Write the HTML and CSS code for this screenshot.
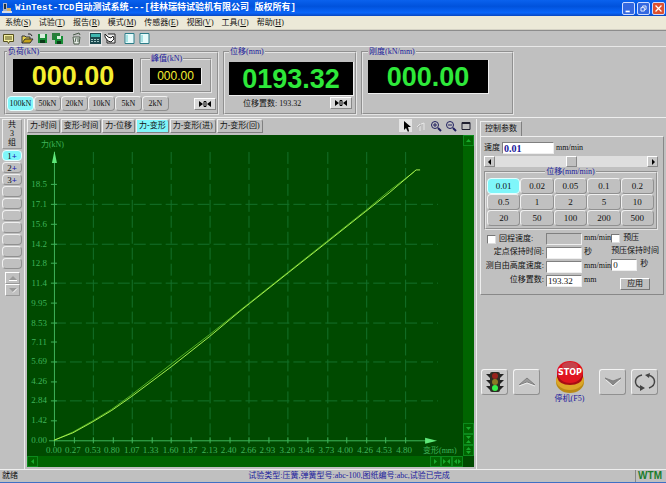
FILE: index.html
```html
<!DOCTYPE html>
<html lang="zh-CN">
<head>
    <meta charset="UTF-8">
    <meta name="viewport" content="width=device-width, initial-scale=1.0">
    <title>WinTest-TCD自动测试系统</title>
    <link rel="stylesheet" href="styles.css">
</head>
<body>

    <header class="title-bar">
        <svg class="app-icon" viewBox="0 0 11 12"><path d="M1 1h4v8H1z" fill="#aab4c8"/><path d="M2 2h2v5H2z" fill="#234"/><path d="M5 6h4v4H5z" fill="#d8b060"/><path d="M0 9h10v2H0z" fill="#d7dce8"/></svg>
        <h1>WinTest-TCD自动测试系统---[桂林瑞特试验机有限公司 版权所有]</h1>
        <div class="window-buttons">
            <button aria-label="最小化"><svg viewBox="0 0 13 13"><path d="M3 9h5v2H3z" fill="#fff"/></svg></button>
            <button aria-label="还原"><svg viewBox="0 0 13 13" fill="none" stroke="#fff"><path d="M5.500 5V3.500h4v4H8M3.500 5.500h4v4h-4z"/></svg></button>
            <button class="close" aria-label="关闭"><svg viewBox="0 0 13 13" stroke="#fff" stroke-width="1.500"><path d="M3 3l7 7M10 3l-7 7"/></svg></button>
        </div>
    </header>

    <nav class="menu">
        <a href="#">系统(<u>S</u>)</a>
        <a href="#">试验(<u>T</u>)</a>
        <a href="#">报告(<u>R</u>)</a>
        <a href="#">模式(<u>M</u>)</a>
        <a href="#">传感器(<u>E</u>)</a>
        <a href="#">视图(<u>V</u>)</a>
        <a href="#">工具(<u>U</u>)</a>
        <a href="#">帮助(<u>H</u>)</a>
    </nav>

    <div class="toolbar">
        <button aria-label="数据"><svg viewBox="0 0 13 13"><path d="M1.500 2.500h10v7h-4l-1 2-1-2h-4z" fill="#f4efa0" stroke="#55501c"/><path d="M3 5h7M3 7h7" stroke="#55501c"/></svg></button>
        <span class="divider"></span>
        <button aria-label="打开"><svg viewBox="0 0 13 13"><path d="M1 11V4h3l1 1h4v2" fill="#e5d04c" stroke="#333"/><path d="M1 11l3-4h8l-3 4z" fill="#c5a41c" stroke="#333"/><path d="M7 2q3-1 4 2" fill="none" stroke="#222"/></svg></button>
        <button aria-label="保存"><svg viewBox="0 0 13 13"><path d="M2 2h9v9H2z" fill="#168c35"/><path d="M4 2h5v4H4z" fill="#d8eedb"/><path d="M4 8h5v3H4z" fill="#0b3a19"/></svg></button>
        <button aria-label="另存"><svg viewBox="0 0 13 13"><path d="M1 1h8v7H1z" fill="#2a7d3b"/><path d="M4 4h8v8H4z" fill="#168c35"/><path d="M6 4h4v3H6z" fill="#d8eedb"/><path d="M6 9h4v3H6z" fill="#0b3a19"/></svg></button>
        <span class="divider"></span>
        <button aria-label="删除"><svg viewBox="0 0 13 13"><path d="M3 5h7l-1 7H4z" fill="#e8efe8" stroke="#4b5b4b"/><path d="M3 3l6-2 1 2M6 6l-1 4M8 6v4" fill="none" stroke="#4b5b4b"/></svg></button>
        <span class="divider"></span>
        <button class="pressed" aria-label="面板"><svg viewBox="0 0 13 13"><path d="M1 1h11v11H1z" fill="#1c4a50"/><path d="M2 2h9v3H2z" fill="#3fb7b0"/><path d="M2 7.500h9M2 9.500h9" stroke="#9fc4c4" stroke-dasharray="2 1"/></svg></button>
        <button aria-label="设置"><svg viewBox="0 0 13 13"><path d="M4 2h7v9H3V6" fill="#eee" stroke="#222"/><path d="M1 2l3 3 3 1 2-2 1 3-3 3-3-1-3-4z" fill="#fff" stroke="#222"/></svg></button>
        <span class="divider"></span>
        <button aria-label="左栏"><svg viewBox="0 0 13 13"><path d="M2 1.500h9v10H2z" fill="#e6fbfb" stroke="#2c7d89"/><path d="M4 3v7" stroke="#6cc" /></svg></button>
        <button aria-label="右栏"><svg viewBox="0 0 13 13"><path d="M2 1.500h9v10H2z" fill="#e6fbfb" stroke="#2c7d89"/><path d="M4 3v7" stroke="#6cc" /></svg></button>
    </div>

    <section class="displays">
        <fieldset class="load">
            <legend>负荷(kN)</legend>
            <div class="load-row">
                <output class="led yellow">000.00</output>
                <fieldset class="peak">
                    <legend>峰值(kN)</legend>
                    <output class="led small yellow">000.00</output>
                </fieldset>
            </div>
            <div class="range-row">
                <button class="key active">100kN</button>
                <button class="key">50kN</button>
                <button class="key">20kN</button>
                <button class="key">10kN</button>
                <button class="key">5kN</button>
                <button class="key">2kN</button>
                <button class="zero" aria-label="负荷清零"><svg viewBox="0 0 14 8"><path d="M1 1l4 3-4 3zM13 1L9 4l4 3z"/><path d="M6 1.500h2v5H6z" fill="none" stroke="#000"/></svg></button>
            </div>
        </fieldset>
        <fieldset class="travel">
            <legend>位移(mm)</legend>
            <output class="led">0193.32</output>
            <div class="preset-row">
                <span>位移置数: 193.32</span>
                <button class="zero" aria-label="位移清零"><svg viewBox="0 0 14 8"><path d="M1 1l4 3-4 3zM13 1L9 4l4 3z"/><path d="M6 1.500h2v5H6z" fill="none" stroke="#000"/></svg></button>
            </div>
        </fieldset>
        <fieldset class="stiffness">
            <legend>刚度(kN/mm)</legend>
            <output class="led">000.00</output>
        </fieldset>
    </section>

    <main>
        <aside class="groups">
            <div class="group-count"><span>共</span><span>3</span><span>组</span></div>
            <button class="key active">1<b>+</b></button>
            <button class="key">2<b>+</b></button>
            <button class="key">3<b>+</b></button>
            <button class="key" aria-label="第4组"></button>
            <button class="key" aria-label="第5组"></button>
            <button class="key" aria-label="第6组"></button>
            <button class="key" aria-label="第7组"></button>
            <button class="key" aria-label="第8组"></button>
            <button class="key" aria-label="第9组"></button>
            <button class="key" aria-label="第10组"></button>
            <div class="page-buttons">
                <button aria-label="上一页"><svg viewBox="0 0 10 8"><path d="M1 6l4-4 4 4z" fill="#999"/><path d="M1 6.500h8" stroke="#fff"/></svg></button>
                <button aria-label="下一页"><svg viewBox="0 0 10 8"><path d="M1 2h8L5 6z" fill="#999"/><path d="M5 6.500l4-4" stroke="#fff"/></svg></button>
            </div>
        </aside>

        <section class="chart">
            <div class="chart-head">
                <button class="tab">力-时间</button>
                <button class="tab">变形-时间</button>
                <button class="tab">力-位移</button>
                <button class="tab active">力-变形</button>
                <button class="tab">力-变形(进)</button>
                <button class="tab">力-变形(回)</button>
                <div class="chart-tools">
                    <button class="pressed" aria-label="选择"><svg viewBox="0 0 12 12"><path d="M4 1v9l2-2 2 4 1-1-1-4h3z"/></svg></button>
                    <button aria-label="移动"><svg viewBox="0 0 12 12" fill="none" stroke="#e6e6e6"><path d="M2 7l3-3v7M6 4l3-1v7"/><path d="M3 7l3-2" stroke="#aaa"/></svg></button>
                    <button aria-label="放大"><svg viewBox="0 0 12 12" fill="none" stroke="#202060"><circle cx="5" cy="5" r="3.500"/><path d="M3 5h4M5 3v4"/><path d="M8 8l3 3" stroke-width="2"/></svg></button>
                    <button aria-label="缩小"><svg viewBox="0 0 12 12" fill="none" stroke="#202060"><circle cx="5" cy="5" r="3.500"/><path d="M3 5h4"/><path d="M8 8l3 3" stroke-width="2"/></svg></button>
                    <button aria-label="全屏"><svg viewBox="0 0 12 12"><path d="M2 2.500h8v7H2z" fill="none" stroke="#202030"/><path d="M2 2h8v2H2z" fill="#202030"/></svg></button>
                </div>
            </div>

            <div class="plot">
                <svg class="curve" viewBox="0 0 437 322">
                    <!-- 网格 -->
                    <path class="grid" d="M66.500 17v289M105.500 17v289M144.500 17v289M183.500 17v289M222.500 17v289M261.500 17v289M301.500 17v289M340.500 17v289M379.500 17v289"/>
                    <path class="grid" d="M27 266.500h385M27 227.500h385M27 188.500h385M27 148.500h385M27 109.500h385M27 69.500h385"/>
                    <!-- 坐标轴 -->
                    <path class="axis" d="M27.500 17v295M22 306.500h385"/>
                    <path class="axis" d="M24 286.500h6M24 266.500h6M24 247.500h6M24 227.500h6M24 207.500h6M24 188.500h6M24 168.500h6M24 148.500h6M24 128.500h6M24 109.500h6M24 89.500h6M24 69.500h6M24 49.500h6"/>
                    <path class="axis" d="M47.500 303v6M66.500 303v6M86.500 303v6M105.500 303v6M125.500 303v6M144.500 303v6M164.500 303v6M183.500 303v6M203.500 303v6M222.500 303v6M242.500 303v6M261.500 303v6M281.500 303v6M301.500 303v6M320.500 303v6M340.500 303v6M359.500 303v6M379.500 303v6"/>
                    <path class="arrow" d="M27.500 16l2.500 12h-5zM411 306.500l-12-3v6z"/>
                    <!-- 刻度 -->
                    <g class="y-labels">
                        <text x="20" y="309">0.00</text>
                        <text x="20" y="289">1.42</text>
                        <text x="20" y="269">2.84</text>
                        <text x="20" y="250">4.26</text>
                        <text x="20" y="230">5.69</text>
                        <text x="20" y="210">7.11</text>
                        <text x="20" y="191">8.53</text>
                        <text x="20" y="171">9.95</text>
                        <text x="20" y="151">11.4</text>
                        <text x="20" y="131">12.8</text>
                        <text x="20" y="112">14.2</text>
                        <text x="20" y="92">15.6</text>
                        <text x="20" y="72">17.1</text>
                        <text x="20" y="52">18.5</text>
                    </g>
                    <g class="x-labels">
                        <text x="27" y="319">0.00</text>
                        <text x="46" y="319">0.27</text>
                        <text x="66" y="319">0.53</text>
                        <text x="85" y="319">0.80</text>
                        <text x="105" y="319">1.07</text>
                        <text x="124" y="319">1.33</text>
                        <text x="144" y="319">1.60</text>
                        <text x="163" y="319">1.87</text>
                        <text x="183" y="319">2.13</text>
                        <text x="202" y="319">2.40</text>
                        <text x="222" y="319">2.66</text>
                        <text x="241" y="319">2.93</text>
                        <text x="261" y="319">3.20</text>
                        <text x="280" y="319">3.46</text>
                        <text x="300" y="319">3.73</text>
                        <text x="319" y="319">4.00</text>
                        <text x="339" y="319">4.26</text>
                        <text x="358" y="319">4.53</text>
                        <text x="378" y="319">4.80</text>
                    </g>
                    <text class="axis-name" x="14" y="12">力(kN)</text>
                    <text class="axis-name" x="397" y="319">变形(mm)</text>
                    <!-- 试验曲线 -->
                    <path class="trace back" d="M27 306Q46 299 65 287Q85 276 104 261L144 230 183 200 222 169 261 138 300 107 339 76 363 56 388 37"/>
                    <path class="trace" d="M27 306Q46 300 65 288Q85 277 105 262L145 232 183 202 213 177 223 169 262 138 300 108 339 77 363 58 390 35H394"/>
                </svg>
                <div class="v-scroll">
                    <button aria-label="向上"><svg viewBox="0 0 9 9"><path d="M2 6l2.500-3L7 6z"/></svg></button>
                    <span class="track"></span>
                    <button aria-label="向下"><svg viewBox="0 0 9 9"><path d="M2 3h5L4.500 6z"/></svg></button>
                    <button aria-label="纵向压缩"><svg viewBox="0 0 9 9"><path d="M2 1h5L4.500 4zM2 8h5L4.500 5z"/></svg></button>
                    <button aria-label="纵向拉伸"><svg viewBox="0 0 9 9"><path d="M2 4h5L4.500 1zM2 5h5L4.500 8z"/></svg></button>
                </div>
                <div class="h-scroll">
                    <button aria-label="向左"><svg viewBox="0 0 9 9"><path d="M6 2v5L3 4.500z"/></svg></button>
                    <span class="track"></span>
                    <button aria-label="向右"><svg viewBox="0 0 9 9"><path d="M3 2v5l3-2.500z"/></svg></button>
                    <button aria-label="横向压缩"><svg viewBox="0 0 9 9"><path d="M1 2v5l3-2.500zM8 2v5L5 4.500z"/></svg></button>
                    <button aria-label="横向拉伸"><svg viewBox="0 0 9 9"><path d="M4 2v5L1 4.500zM5 2v5l3-2.500z"/></svg></button>
                </div>
            </div>
        </section>

        <section class="side">
            <div class="params">
                <button class="param-tab">控制参数</button>
                <div class="param-body">
                    <div class="speed-row">
                        <label for="speed">速度</label>
                        <input type="text" id="speed" value="0.01">
                        <span>mm/min</span>
                    </div>
                    <div class="slider-row">
                        <button aria-label="减小"><svg viewBox="0 0 8 8"><path d="M5 1v6L2 4z"/></svg></button>
                        <input type="range" min="0" max="100" value="50" aria-label="速度">
                        <button aria-label="增大"><svg viewBox="0 0 8 8"><path d="M3 1v6l3-3z"/></svg></button>
                    </div>
                    <fieldset class="speeds">
                        <legend>位移(mm/min)</legend>
                        <div class="speed-grid">
                            <button class="key active">0.01</button>
                            <button class="key">0.02</button>
                            <button class="key">0.05</button>
                            <button class="key">0.1</button>
                            <button class="key">0.2</button>
                            <button class="key">0.5</button>
                            <button class="key">1</button>
                            <button class="key">2</button>
                            <button class="key">5</button>
                            <button class="key">10</button>
                            <button class="key">20</button>
                            <button class="key">50</button>
                            <button class="key">100</button>
                            <button class="key">200</button>
                            <button class="key">500</button>
                        </div>
                    </fieldset>
                    <div class="settings">
                        <div class="fields">
                            <label class="check" for="returnOn"><input type="checkbox" id="returnOn">回程速度:</label>
                            <input type="text" aria-label="回程速度" disabled>
                            <span>mm/min</span>
                            <label for="holdTime">定点保持时间:</label>
                            <input type="text" id="holdTime">
                            <span>秒</span>
                            <label for="freeSpeed">测自由高度速度:</label>
                            <input type="text" id="freeSpeed">
                            <span>mm/min</span>
                            <label for="preset">位移置数:</label>
                            <input type="text" id="preset" value="193.32">
                            <span>mm</span>
                        </div>
                        <div class="preload">
                            <label class="check" for="preloadOn"><input type="checkbox" id="preloadOn">预压</label>
                            <label for="preloadTime">预压保持时间</label>
                            <div class="preload-time"><input type="text" id="preloadTime" value="0"><span>秒</span></div>
                            <button class="apply">应用</button>
                        </div>
                    </div>
                </div>
            </div>

            <div class="controls">
                <div class="pair">
                    <button class="control" aria-label="启动">
                        <svg viewBox="0 0 24 24">
                            <path d="M3 4h18l-4 4H7zM3 10h18l-4 4H7zM3 16h18l-4 4H7z" fill="#222"/>
                            <rect x="7" y="2" width="10" height="20" rx="2" fill="#2c2c24"/>
                            <circle cx="12" cy="6" r="3" fill="#96231c"/>
                            <circle cx="12" cy="12" r="3" fill="#8a7a24"/>
                            <circle cx="12" cy="18" r="3" fill="#35f04a"/>
                        </svg>
                    </button>
                    <button class="control" aria-label="上升"><svg viewBox="0 0 24 24"><path d="M4 15l8-7 8 7-8-3z" fill="#999" stroke="#808080"/><path d="M4 16l8-3 8 3" fill="none" stroke="#eee"/></svg></button>
                </div>
                <button class="stop">
                    <svg viewBox="0 0 30 34">
                        <ellipse cx="15" cy="22" rx="14" ry="11" fill="#b98a14"/>
                        <ellipse cx="15" cy="20" rx="14" ry="10" fill="#dca628"/>
                        <path d="M2 12v5q2 8 13 8t13-8v-5z" fill="#a80c14"/>
                        <ellipse cx="15" cy="12" rx="13" ry="11" fill="#e0141f"/>
                        <ellipse cx="15" cy="6" rx="8" ry="4" fill="#c4424a"/>
                        <text x="15" y="15">STOP</text>
                    </svg>
                    <span>停机(F5)</span>
                </button>
                <div class="pair">
                    <button class="control" aria-label="下降"><svg viewBox="0 0 24 24"><path d="M4 8l8 3 8-3-8 7z" fill="#888" stroke="#808080"/><path d="M5 10l7 6 7-6" fill="none" stroke="#eee"/></svg></button>
                    <button class="control" aria-label="循环"><svg viewBox="0 0 24 24"><path d="M9 5C1 7 0 15 8 18M15 5c8 2 9 10 1 13" fill="none" stroke="#444" stroke-width="1.500"/><path d="M7 15l5 3-5 3zM17 3l-5 2 4 3z" fill="#444"/></svg></button>
                </div>
            </div>
        </section>
    </main>

    <footer class="status">
        <span class="ready">就绪</span>
        <span class="info">试验类型:压簧,弹簧型号:abc-100,图纸编号:abc,试验已完成</span>
        <span class="brand">WTM</span>
    </footer>

</body>
</html>
```
FILE: styles.css
```css
* {
    box-sizing: border-box;
}

body {
    display: flex;
    flex-direction: column;
    min-height: 100vh;
    margin: 0;
    background-color: #c0c0c0;
    color: #111;
    font: 8px/10px "Liberation Serif", "Noto Sans CJK SC", serif;
    border-bottom: 1px solid #3f6fc4;
}

button, input, output {
    font: inherit;
    color: inherit;
}

button {
    display: flex;
    align-items: center;
    justify-content: center;
    margin: 0;
    padding: 0;
    border: none;
    background: none;
    white-space: nowrap;
}

svg {
    display: block;
}

input {
    min-width: 0;
    margin: 0;
    border-radius: 0;
}

fieldset {
    min-width: 0;
    margin: 0;
    border: 2px groove #e4e4e4;
}

legend {
    padding: 0 1px;
    color: #1a1a9c;
    line-height: 8px;
}

/* 标题栏 */
.title-bar {
    display: flex;
    align-items: center;
    height: 16px;
    padding: 0 1px 0 2px;
    background: linear-gradient(#0a62ee, #0052dc 40%, #0a66fa 80%, #0846c0);
}

.app-icon {
    width: 11px;
    height: 12px;
}

.title-bar h1 {
    flex: 1;
    margin: 0 0 0 2px;
    color: #fff;
    font: bold 9px/14px "Liberation Mono", "Noto Sans CJK SC", monospace;
    white-space: nowrap;
}

.window-buttons {
    display: flex;
    gap: 2px;
}

.window-buttons button {
    width: 13px;
    height: 13px;
    border: 1px solid #cfdcff;
    border-radius: 2px;
    background-color: #3468e0;
}

.window-buttons .close {
    background-color: #dc5030;
}

/* 菜单和工具栏 */
.menu {
    display: flex;
    gap: 8px;
    height: 14px;
    padding: 2px 5px;
    background-color: #ece9d8;
    border-bottom: 1px solid #d4d1c4;
}

.menu a {
    color: #111;
    text-decoration: none;
}

.toolbar {
    display: flex;
    align-items: center;
    gap: 2px;
    height: 17px;
    padding: 0 2px;
    border-top: 1px solid #8c8c8c;
    border-bottom: 1px solid #e8e8e8;
}

.toolbar button {
    width: 13px;
    height: 14px;
}

.toolbar svg {
    width: 13px;
    height: 13px;
}

.toolbar .pressed,
.chart-tools .pressed {
    background-color: #e4e4e4;
}

.divider {
    width: 2px;
}

/* 显示区 */
.displays {
    display: flex;
    gap: 4px;
    height: 71px;
    padding: 1px 4px 2px;
    border-bottom: 1px solid #eee;
}

.displays > fieldset {
    height: 67px;
    padding: 4px 5px 0;
}

.displays .load {
    width: 215px;
    padding: 0 1px;
}

.displays .travel {
    width: 134px;
    padding: 6px 1px 0 4px;
}

.displays .stiffness {
    width: 153px;
}

.led {
    display: block;
    width: 121px;
    height: 34px;
    background-color: #000;
    border-right: 1px solid #eee;
    border-bottom: 1px solid #eee;
    color: #2ee83a;
    font: bold 27px/34px "Liberation Sans", sans-serif;
    text-align: center;
}

.travel .led {
    width: 125px;
}

.led.yellow {
    color: #f4ee30;
}

.led.small {
    width: 52px;
    height: 17px;
    font-size: 12px;
    line-height: 17px;
    font-weight: normal;
}

.load-row {
    display: flex;
    justify-content: space-between;
    padding: 3px 4px 0 6px;
}

.peak {
    width: 72px;
    height: 38px;
    margin-top: -4px;
    padding: 5px 8px 0;
}

.range-row {
    display: flex;
    align-items: center;
    padding-top: 3px;
}

.key {
    border: 1px solid #909090;
    border-top-color: #f0f0f0;
    border-left-color: #f0f0f0;
    border-radius: 4px;
    background-color: #c0c0c0;
}

.key.active {
    background-color: #7ff6fa;
    border-color: #e4ffff;
}

.range-row .key {
    width: 27px;
    height: 15px;
}

.zero {
    width: 22px;
    height: 12px;
    border: 1px solid #888;
    border-top-color: #fff;
    border-left-color: #fff;
    background-color: #d8d8d8;
}

.zero svg {
    width: 14px;
    height: 8px;
}

.range-row .zero {
    margin-left: auto;
}

.preset-row {
    display: flex;
    justify-content: space-between;
    padding: 1px 2px 0 14px;
}

.preset-row span {
    padding-top: 2px;
}

/* 主区 */
main {
    display: flex;
    flex: 1;
    padding-top: 1px;
}

.groups {
    display: flex;
    flex-direction: column;
    gap: 1px;
    width: 25px;
    padding: 0 2px;
    border-right: 1px solid #eee;
}

.group-count {
    display: flex;
    flex-direction: column;
    align-items: center;
    height: 30px;
    border: 1px solid #999;
    border-left-color: #eee;
    border-top-color: #eee;
    line-height: 9px;
}

.groups .key {
    height: 11px;
    font-size: 9px;
}

.groups b {
    color: #2020b0;
}

.page-buttons {
    padding: 2px 3px;
}

.page-buttons button {
    width: 15px;
    height: 12px;
    border: 1px solid #999;
    border-top-color: #fff;
    border-left-color: #fff;
}

.page-buttons svg {
    width: 10px;
    height: 8px;
}

.chart {
    flex: 1;
    min-width: 0;
    padding: 0 2px;
    border-right: 1px solid #eee;
}

.chart-head {
    display: flex;
    gap: 1px;
    height: 16px;
    padding-bottom: 2px;
}

.tab {
    padding: 0 2px;
    border: 1px solid #808080;
    border-top-color: #f0f0f0;
    border-left-color: #f0f0f0;
    border-radius: 0 3px 0 0;
}

.tab.active {
    background-color: #7ff6fa;
}

.chart-tools {
    display: flex;
    gap: 2px;
    margin-left: auto;
    padding-right: 2px;
}

.chart-tools button {
    width: 13px;
    height: 13px;
}

.chart-tools svg {
    width: 12px;
    height: 12px;
}

.plot {
    display: grid;
    grid-template-columns: 1fr 11px;
    background-color: #004a00;
}

.curve {
    width: 100%;
    fill: #3fb45a;
}

.curve text {
    font-size: 9px;
}

.curve .axis-name {
    font-size: 8px;
}

.y-labels {
    text-anchor: end;
}

.x-labels {
    text-anchor: middle;
}

.grid {
    fill: none;
    stroke: #14702a;
    stroke-dasharray: 12 4;
}

.axis {
    fill: none;
    stroke: #3fb45a;
}

.arrow {
    fill: #5fe87a;
}

.trace {
    fill: none;
    stroke: #a8f050;
}

.trace.back {
    stroke: #4fae20;
}

.v-scroll,
.h-scroll {
    display: flex;
    background-color: #006400;
}

.v-scroll {
    flex-direction: column;
}

.track {
    flex: 1;
}

.plot button {
    width: 11px;
    height: 11px;
    border: 1px solid #0c8a1c;
}

.plot button svg {
    width: 9px;
    height: 9px;
    fill: #18a82c;
}

/* 控制参数 */
.side {
    width: 189px;
    padding: 2px 2px 0 3px;
}

.param-tab {
    width: 42px;
    height: 15px;
    border: 1px solid #808080;
    border-bottom: none;
    border-top-color: #eee;
    border-left-color: #eee;
}

.param-body {
    padding: 5px 5px 4px 3px;
    border: 1px solid #888;
    border-top-color: #eee;
    border-left-color: #eee;
}

.speed-row,
.slider-row {
    display: flex;
    align-items: center;
}

.speed-row {
    gap: 2px;
}

.param-body input[type="text"] {
    height: 12px;
    padding: 0 1px;
    border: 1px solid #808080;
    border-right-color: #eee;
    border-bottom-color: #eee;
    background-color: #fff;
    font-size: 9px;
}

.param-body input[type="text"]:disabled {
    background-color: #c0c0c0;
}

.param-body .speed-row input {
    width: 52px;
    color: #14149a;
    font-size: 10px;
    font-weight: bold;
}

.slider-row {
    margin-top: 2px;
    background-color: #dedede;
}

.slider-row button {
    width: 11px;
    height: 11px;
    border: 1px solid #888;
    border-top-color: #fff;
    border-left-color: #fff;
    background-color: #c8c8c8;
}

.slider-row svg {
    width: 8px;
    height: 8px;
}

.slider-row input {
    flex: 1;
    height: 11px;
    appearance: none;
    background: none;
}

.slider-row input::-webkit-slider-thumb {
    width: 11px;
    height: 11px;
    appearance: none;
    border: 1px solid #888;
    border-top-color: #fff;
    border-left-color: #fff;
    background-color: #c0c0c0;
}

.speeds {
    margin-top: 1px;
    padding: 2px 2px 2px 1px;
}

.speeds legend {
    margin: 0 auto;
}

.speed-grid {
    display: grid;
    grid-template-columns: repeat(5, 1fr);
}

.speed-grid .key {
    height: 16px;
    font-size: 9px;
}

.settings {
    display: flex;
    justify-content: space-between;
    padding-top: 3px;
}

.fields {
    display: grid;
    grid-template-columns: 60px 36px auto;
    grid-auto-rows: 12px;
    gap: 2px;
    text-align: right;
}

.fields span {
    text-align: left;
}

.check {
    display: flex;
    align-items: center;
    gap: 3px;
}

.check input {
    width: 9px;
    height: 9px;
    appearance: none;
    border: 1px solid #777;
    border-right-color: #ddd;
    border-bottom-color: #ddd;
    background-color: #fff;
}

.fields .check {
    padding-left: 3px;
}

.preload {
    display: flex;
    flex-direction: column;
    gap: 3px;
    width: 48px;
    white-space: nowrap;
}

.preload-time {
    display: flex;
    gap: 3px;
}

.preload-time input {
    width: 26px;
}

.apply {
    align-self: center;
    width: 30px;
    height: 12px;
    margin-top: 4px;
    border: 1px solid #777;
    border-top-color: #fff;
    border-left-color: #fff;
}

.controls {
    display: flex;
    justify-content: space-between;
    padding: 65px 6px 0 1px;
}

.pair {
    display: flex;
    gap: 5px;
    padding-top: 9px;
}

.control {
    width: 27px;
    height: 26px;
    border: 1px solid #909090;
    border-top-color: #f4f4f4;
    border-left-color: #f4f4f4;
    border-radius: 3px;
    background-color: #c8c8c8;
}

.control svg {
    width: 24px;
    height: 24px;
}

.stop {
    flex-direction: column;
    color: #1a1a9c;
}

.stop svg {
    width: 30px;
    height: 34px;
}

.stop text {
    fill: #fff;
    font: bold 8px "DejaVu Sans", sans-serif;
    text-anchor: middle;
}

/* 状态栏 */
.status {
    display: grid;
    grid-template-columns: 1fr auto 1fr;
    align-items: center;
    height: 13px;
    padding: 0 2px;
    border-top: 1px solid #eee;
}

.info {
    padding-left: 32px;
    color: #1a1a9c;
}

.brand {
    justify-self: end;
    padding: 0 2px;
    border-left: 1px solid #888;
    color: #1c7c2c;
    font: bold 10px/12px "Liberation Sans", sans-serif;
}
```
